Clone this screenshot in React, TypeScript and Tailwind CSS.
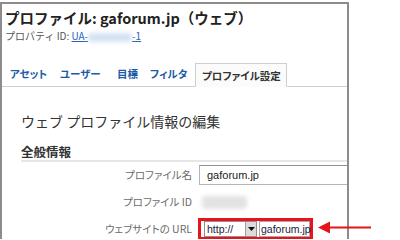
const jp = "font-['Noto_Sans_CJK_JP','Noto_Sans',sans-serif]";

function Tab({ label, width }: { label: string; width: number }) {
  return (
    <div
      style={{ width }}
      className="h-[24px] leading-[24px] text-[10.5px] font-bold text-[#1d5aa6] whitespace-nowrap [font-feature-settings:'palt']"
    >
      {label}
    </div>
  );
}

function FieldRow({ label, className, children }: { label: string; className: string; children: React.ReactNode }) {
  return (
    <div className={`flex items-center ${className}`}>
      <div className="shrink-0 w-[172px] pr-[1px] text-right text-[10.5px] text-[#6b6b6b] whitespace-nowrap [font-feature-settings:'palt']">
        {label}
      </div>
      <div className="shrink-0 ml-[6px] flex items-center h-full">{children}</div>
    </div>
  );
}

export default function App() {
  return (
    <div className={`relative w-[400px] h-[239px] bg-white overflow-hidden ${jp}`}>
      <div className="mt-[2px] w-[349px] h-[260px] border-2 border-[#8c8c8c] overflow-hidden">
        {/* header */}
        <div className="pl-[3px] pt-[4px]">
          <h1 className="text-[14.5px] leading-[20px] font-bold text-[#222] whitespace-nowrap">
            プロファイル: gaforum.jp（ウェブ）
          </h1>
          <p className="mt-[2px] text-[10px] leading-[12px] text-[#555] whitespace-nowrap">
            プロパティ ID:{' '}
            <span className="text-[#2a63b8] underline">UA-</span>
            <span className="inline-block align-middle w-[44px] h-[9px] bg-[#d3e3f3] blur-[2px] rounded-sm" />
            <span className="text-[#2a63b8] underline">-1</span>
          </p>
        </div>

        {/* tabs */}
        <div className="mt-[20px] flex items-end pl-[8px] border-b border-[#cfcfcf]">
          <Tab label="アセット" width={50} />
          <Tab label="ユーザー" width={57} />
          <Tab label="目標" width={33} />
          <Tab label="フィルタ" width={45} />
          <div className="-mb-px w-[92px] h-[24px] pl-[6px] leading-[23px] bg-[#fbfbfb] border border-[#cfcfcf] border-b-[#fbfbfb] text-[10.5px] font-bold text-[#333] whitespace-nowrap [font-feature-settings:'palt']">
            プロファイル設定
          </div>
        </div>

        {/* body */}
        <div className="pl-[19px]">
          <h2 className="mt-[24px] text-[14px] leading-[20px] text-[#333] whitespace-nowrap">
            ウェブ プロファイル情報の編集
          </h2>
          <div className="mt-[13px] border-b-2 border-[#e6e6e6]">
            <h3 className="text-[12.5px] leading-[16px] font-bold text-[#333]">全般情報</h3>
          </div>

          <FieldRow label="プロファイル名" className="mt-[3px] h-[20px]">
            <div className="w-[200px] h-[20px] border border-[#b5b5b5] border-t-[#8f8f8f] bg-white pl-[7px] text-[11px] leading-[18px] text-[#222] font-['Liberation_Sans',sans-serif]">
              gaforum.jp
            </div>
          </FieldRow>

          <FieldRow label="プロファイル ID" className="mt-[6px] h-[22px]">
            <div className="ml-[3px] w-[45px] h-[13px] bg-[#e2e2e2] blur-[2px] rounded" />
          </FieldRow>

          <FieldRow label="ウェブサイトの URL" className="mt-[5px] h-[22px]">
            <div className="-ml-[1px] flex items-center w-[115px] h-[22px] border-[3px] border-[#e8141b] pl-[3px] font-['Liberation_Sans',sans-serif] text-[10.5px] text-[#1a1a3a]">
              <div className="flex items-center w-[53px] h-[16px] border border-[#8f8f8f] bg-white">
                <span className="pl-[2px] flex-1 leading-[14px]">http://</span>
                <span className="w-[11px] h-[14px] bg-[#dcdcdc] border-l border-[#a0a0a0] flex items-center justify-center">
                  <svg width="7" height="4" viewBox="0 0 7 4">
                    <path d="M0 0 L7 0 L3.5 4 Z" fill="#111" />
                  </svg>
                </span>
              </div>
              <div className="ml-[2px] w-[51px] h-[16px] border border-[#a8a8a8] bg-white pl-[1px] leading-[14px] whitespace-nowrap">
                gaforum.jp
              </div>
            </div>
          </FieldRow>
        </div>
      </div>

      {/* annotation arrow */}
      <svg className="absolute left-[318px] top-[221px]" width="54" height="13" viewBox="0 0 54 13">
        <path d="M9 6.5 L53 6.5" stroke="#e3141b" strokeWidth="2" />
        <path d="M0 6.5 L12 0.5 L12 12.5 Z" fill="#e3141b" />
      </svg>
    </div>
  );
}
